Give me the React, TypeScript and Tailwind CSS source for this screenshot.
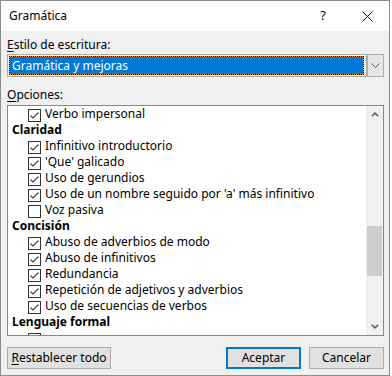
import React from "react";

type Row =
  | { kind: "heading"; label: string }
  | { kind: "option"; label: string; checked: boolean };

const rows: Row[] = [
  { kind: "option", label: "Verbo impersonal", checked: true },
  { kind: "heading", label: "Claridad" },
  { kind: "option", label: "Infinitivo introductorio", checked: true },
  { kind: "option", label: "'Que' galicado", checked: true },
  { kind: "option", label: "Uso de gerundios", checked: true },
  { kind: "option", label: "Uso de un nombre seguido por 'a' más infinitivo", checked: true },
  { kind: "option", label: "Voz pasiva", checked: false },
  { kind: "heading", label: "Concisión" },
  { kind: "option", label: "Abuso de adverbios de modo", checked: true },
  { kind: "option", label: "Abuso de infinitivos", checked: true },
  { kind: "option", label: "Redundancia", checked: true },
  { kind: "option", label: "Repetición de adjetivos y adverbios", checked: true },
  { kind: "option", label: "Uso de secuencias de verbos", checked: true },
  { kind: "heading", label: "Lenguaje formal" },
  // only the top edge of this one shows above the list's bottom border
  { kind: "option", label: "", checked: true },
];

function CheckBox({ checked }: { checked: boolean }) {
  return (
    <div className="w-[13px] h-[13px] shrink-0 border border-[#333333] bg-white mt-[3px]">
      {checked && (
        <svg width="11" height="11" viewBox="0 0 11 11">
          <polyline points="1.5,5.5 4,8 9.5,2.5" fill="none" stroke="#3c3c3c" strokeWidth="1.1" />
        </svg>
      )}
    </div>
  );
}

function OptionRow({ row }: { row: Row }) {
  if (row.kind === "heading") {
    return <div className="h-4 leading-4 pl-[4px] font-bold whitespace-nowrap">{row.label}</div>;
  }
  return (
    <div className="h-4 flex items-start pl-[20px] gap-[4px] whitespace-nowrap">
      <CheckBox checked={row.checked} />
      {row.label && <span className="leading-4">{row.label}</span>}
    </div>
  );
}

function Chevron({ dir }: { dir: "up" | "down" }) {
  return (
    <svg width="8" height="5" viewBox="0 0 8 5">
      <polyline
        points={dir === "up" ? "0.8,4.3 4,1.1 7.2,4.3" : "0.8,0.7 4,3.9 7.2,0.7"}
        fill="none"
        stroke="#606060"
        strokeWidth="1.6"
      />
    </svg>
  );
}

function Button({ children, primary, width }: { children: React.ReactNode; primary?: boolean; width: string }) {
  return (
    <div
      className={`${width} h-[22px] flex items-center justify-center bg-[#e1e1e1] ${
        primary ? "border-2 border-[#0078d7]" : "border border-[#adadad]"
      }`}
    >
      {children}
    </div>
  );
}

export default function App() {
  return (
    <div className="w-[392px] h-[376px] bg-white font-['Noto_Sans',sans-serif] text-[12px] text-black">
      <div className="w-[390px] h-[376px] border border-[#8c8c8c] flex flex-col">
        {/* title bar */}
        <div className="h-[30px] bg-white flex items-center pl-[8px] pr-[16px]">
          <span className="flex-1">Gramática</span>
          <span className="text-[13px] mr-[36px]">?</span>
          <svg width="11" height="11" viewBox="0 0 11 11">
            <path d="M0.5 0.5 L10.5 10.5 M10.5 0.5 L0.5 10.5" stroke="#111" strokeWidth="1" />
          </svg>
        </div>

        {/* body */}
        <div className="flex-1 bg-[#f0f0f0] pl-[6px] pr-[5px] flex flex-col">
          <div className="mt-[6px] h-4 leading-4">
            <span className="underline underline-offset-2">E</span>stilo de escritura:
          </div>

          <div className="mt-[1px] h-[23px] border border-[#adadad] bg-white flex items-stretch">
            <div className="flex-1 p-[1px]">
              <div className="h-full bg-[#ff8a1c]">
                <div className="h-full border border-dotted border-black bg-[#0078d7] bg-clip-padding text-white leading-[17px] pl-[2px]">
                  Gramática y mejoras
                </div>
              </div>
            </div>
            <div className="w-[17px] ml-[1px] border-l-2 border-[#adadad] bg-[#e6e6e6] flex items-center justify-center">
              <svg width="9" height="5" viewBox="0 0 9 5">
                <polyline points="0.5,0.5 4.5,4.5 8.5,0.5" fill="none" stroke="#555" strokeWidth="1" />
              </svg>
            </div>
          </div>

          <div className="mt-[10px] h-4 leading-4">
            <span className="underline underline-offset-2">O</span>pciones:
          </div>

          <div className="mt-[2px] h-[231px] border border-[#828790] bg-white flex">
            <div className="flex-1 overflow-hidden">
              {rows.map((r, i) => (
                <OptionRow key={i} row={r} />
              ))}
            </div>
            <div className="w-[17px] bg-[#f0f0f0] flex flex-col">
              <div className="h-[17px] flex items-center justify-center">
                <Chevron dir="up" />
              </div>
              <div className="flex-1 flex flex-col px-[1px]">
                <div className="h-[103px]" />
                <div className="h-[50px] bg-[#cdcdcd]" />
              </div>
              <div className="h-[17px] flex items-center justify-center">
                <Chevron dir="down" />
              </div>
            </div>
          </div>

          <div className="mt-[11px] flex items-center">
            <Button width="w-[104px]">
              <span>
                <span className="underline underline-offset-2">R</span>establecer todo
              </span>
            </Button>
            <div className="flex-1" />
            <Button width="w-[75px]" primary>
              Aceptar
            </Button>
            <div className="w-[8px]" />
            <Button width="w-[75px]">Cancelar</Button>
          </div>
        </div>
      </div>
    </div>
  );
}
